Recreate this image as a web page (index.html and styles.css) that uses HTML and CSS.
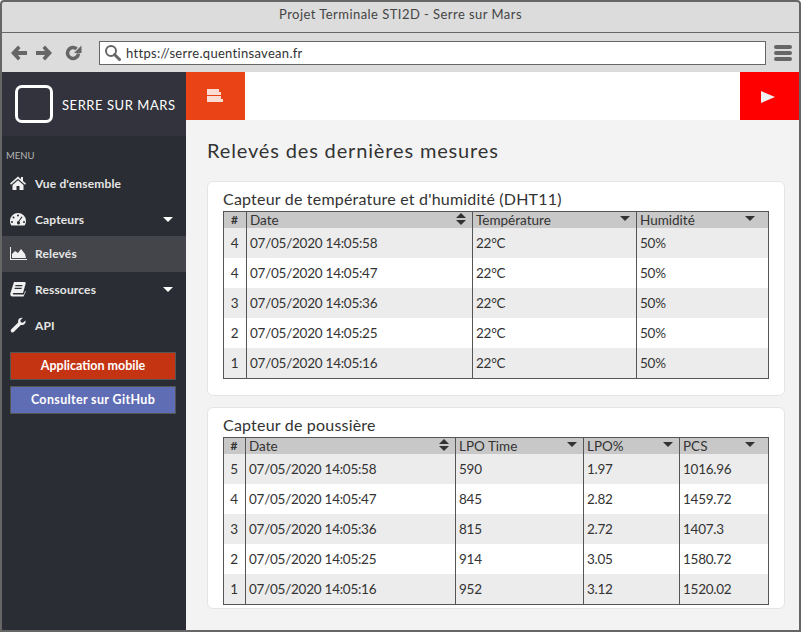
FILE: index.html
```html
<!DOCTYPE html>
<html>
<head>
  <title>Serre sur Mars</title>
  <link rel="stylesheet" href="styles.css">
</head>
<body>
  <div class="window">
    <div class="titlebar">Projet Terminale STI2D - Serre sur Mars</div>
    <div class="toolbar">
      <svg class="tool-icon" width="18" height="16" viewBox="0 0 18 16"><path d="M8 .500 1 8l7 7.500 2.500-2.500L8 10h9V6H8l2.500-3z"/></svg>
      <svg class="tool-icon" width="18" height="16" viewBox="0 0 18 16"><path d="M10 .500 17 8l-7 7.500L7.500 13 10 10H1V6h9L7.500 3z"/></svg>
      <svg class="tool-icon" width="17" height="16" viewBox="0 0 17 16"><path d="M13.500 8.500a5.500 5.500 0 1 1-1.900-4.700" fill="none" stroke="#666" stroke-width="3.500"/><path d="M16.500 .500v7.500H9z"/></svg>
      <div class="address">
        <svg width="17" height="17" viewBox="0 0 17 17"><circle cx="7" cy="7" r="5" fill="none" stroke="#666" stroke-width="2"/><path d="M10.500 10.500 15.500 15.500" stroke="#666" stroke-width="3" stroke-linecap="round"/></svg>
        <span>https://serre.quentinsavean.fr</span>
      </div>
      <div class="burger"><i></i><i></i><i></i></div>
    </div>
    <div class="app">
      <aside class="sidebar">
        <div class="brand">
          <div class="logo"></div>
          <span>SERRE SUR MARS</span>
        </div>
        <div class="menu-label">MENU</div>
        <nav class="menu">
          <a class="menu-item">
            <svg width="18" height="16" viewBox="0 0 18 16"><path d="M9 1.500 1 8.500l1 1.200L9 3.800l7 5.900 1-1.200-3-2.600V2h-2v2.200zM3.500 10 9 5.300l5.500 4.700v5h-4v-4h-3v4h-4z"/></svg>
            <span>Vue d'ensemble</span>
          </a>
          <a class="menu-item short">
            <svg width="18" height="16" viewBox="0 0 18 16"><path fill-rule="evenodd" d="M9 2a8 8 0 0 0-8 8c0 1.800.6 3.300 1.400 4.500h13.200C16.400 13.300 17 11.800 17 10a8 8 0 0 0-8-8zM9 3.500a1 1 0 1 1 0 2 1 1 0 0 1 0-2zM4.500 5.500a1 1 0 1 1 0 2 1 1 0 0 1 0-2zM3 10a1 1 0 1 1 0 2 1 1 0 0 1 0-2zM15 10a1 1 0 1 1 0 2 1 1 0 0 1 0-2zM12.500 5.500l1 .6L10.300 10.500a1.600 1.600 0 1 1-2.300.8 1.600 1.600 0 0 1 1.500-1.200z"/></svg>
            <span>Capteurs</span>
            <b class="caret"></b>
          </a>
          <a class="menu-item active">
            <svg width="18" height="16" viewBox="0 0 18 16"><path d="M1 2h1v12h16v1H1zM3 13V9l3-3 3 2 3-4 4 5 1 4z"/></svg>
            <span>Relevés</span>
          </a>
          <a class="menu-item">
            <svg width="18" height="16" viewBox="0 0 18 16"><path fill-rule="evenodd" d="M5 1h11l.8 1-2.800 10H4.500c-1 0-1 1.500 0 1.500H15l1-3.500.8.800L14.500 15.500H3.500C1.800 15.500 1 14 1.300 12.500zM6.500 4l-.3 1.200h7L13.500 4zM5.800 6.700l-.3 1.200h7l.3-1.200z"/></svg>
            <span>Ressources</span>
            <b class="caret"></b>
          </a>
          <a class="menu-item">
            <svg width="18" height="16" viewBox="0 0 18 16"><path d="M16.500 3.500c.5 2-.5 4-2.500 4.500-.8.200-1.500.100-2.200-.1L5 14.800c-.8.800-2 .8-2.700.1-.8-.8-.8-1.900 0-2.700l6.900-6.800C9 4.600 9 3.800 9.300 3c.7-1.800 2.700-2.700 4.500-2.200l-2.500 2.500.5 2 2 .5z"/></svg>
            <span>API</span>
          </a>
        </nav>
        <div class="actions">
          <a class="btn btn-red">Application mobile</a>
          <a class="btn btn-blue">Consulter sur GitHub</a>
        </div>
      </aside>
      <div class="page">
        <header class="topbar">
          <div class="top-btn orange">
            <div class="lines"><i class="w12"></i><i class="w14"></i><i class="w14"></i><i class="w16"></i></div>
          </div>
          <div class="top-btn red"><b class="play"></b></div>
        </header>
        <main class="content">
          <h1>Relevés des dernières mesures</h1>

          <section class="card first">
            <h2>Capteur de température et d'humidité (DHT11)</h2>
            <table>
              <colgroup><col class="c-23"><col class="c-226"><col class="c-164"><col></colgroup>
              <thead>
                <tr>
                  <th class="num">#</th>
                  <th>Date<b class="sort"></b></th>
                  <th>Température<b class="down"></b></th>
                  <th>Humidité<b class="down d2"></b></th>
                </tr>
              </thead>
              <tbody>
                <tr><td class="num">4</td><td>07/05/2020 14:05:58</td><td>22°C</td><td>50%</td></tr>
                <tr><td class="num">4</td><td>07/05/2020 14:05:47</td><td>22°C</td><td>50%</td></tr>
                <tr><td class="num">3</td><td>07/05/2020 14:05:36</td><td>22°C</td><td>50%</td></tr>
                <tr><td class="num">2</td><td>07/05/2020 14:05:25</td><td>22°C</td><td>50%</td></tr>
                <tr><td class="num">1</td><td>07/05/2020 14:05:16</td><td>22°C</td><td>50%</td></tr>
              </tbody>
            </table>
          </section>

          <section class="card second">
            <h2>Capteur de poussière</h2>
            <table>
              <colgroup><col class="c-22"><col class="c-210"><col class="c-128"><col class="c-96"><col></colgroup>
              <thead>
                <tr>
                  <th class="num">#</th>
                  <th>Date<b class="sort"></b></th>
                  <th>LPO Time<b class="down"></b></th>
                  <th>LPO%<b class="down"></b></th>
                  <th>PCS<b class="down d2"></b></th>
                </tr>
              </thead>
              <tbody>
                <tr><td class="num">5</td><td>07/05/2020 14:05:58</td><td>590</td><td>1.97</td><td>1016.96</td></tr>
                <tr><td class="num">4</td><td>07/05/2020 14:05:47</td><td>845</td><td>2.82</td><td>1459.72</td></tr>
                <tr><td class="num">3</td><td>07/05/2020 14:05:36</td><td>815</td><td>2.72</td><td>1407.3</td></tr>
                <tr><td class="num">2</td><td>07/05/2020 14:05:25</td><td>914</td><td>3.05</td><td>1580.72</td></tr>
                <tr><td class="num">1</td><td>07/05/2020 14:05:16</td><td>952</td><td>3.12</td><td>1520.02</td></tr>
              </tbody>
            </table>
          </section>
        </main>
      </div>
    </div>
  </div>
</body>
</html>
```

FILE: styles.css
```css
* {
  box-sizing: border-box;
}

body {
  margin: 0;
  font-family: Lato, "Open Sans", sans-serif;
  color: #333;
}

.window {
  width: 801px;
  height: 632px;
  border: 2px solid #666;
  border-radius: 4px 4px 0 0;
  display: flex;
  flex-direction: column;
  overflow: hidden;
  background-color: #dcdcdc;
}

.titlebar {
  height: 31px;
  border-bottom: 1px solid #666;
  padding-top: 4px;
  text-align: center;
  font-size: 13px;
  line-height: 16px;
  letter-spacing: 0.45px;
  color: #444;
}

.toolbar {
  height: 39px;
  display: flex;
  align-items: center;
  padding-left: 8px;
  flex-shrink: 0;
}

.tool-icon {
  fill: #666;
  margin-right: 7px;
}

.tool-icon:nth-child(3) {
  margin-left: 5px;
  margin-right: 9px;
}

.address {
  width: 667px;
  height: 24px;
  margin-left: 8px;
  display: flex;
  align-items: center;
  gap: 5px;
  padding-left: 4px;
  background-color: #fff;
  border: 1px solid #666;
  font-size: 13px;
  letter-spacing: 0.3px;
}

.burger {
  margin-left: 8px;
  width: 18px;
  display: flex;
  flex-direction: column;
  gap: 2px;
}

.burger i {
  height: 4px;
  border-radius: 2px;
  background-color: #666;
}

.app {
  flex: 1;
  display: flex;
  min-height: 0;
}

.sidebar {
  width: 184px;
  flex-shrink: 0;
  background-color: #2a2d33;
  color: #f0f0f0;
}

.brand {
  height: 64px;
  display: flex;
  align-items: center;
  gap: 9px;
  padding-left: 13px;
  background-color: #32333c;
  color: #fff;
  font-size: 13px;
  letter-spacing: 0.55px;
}

.brand span {
  padding-top: 2px;
}

.logo {
  width: 38px;
  height: 38px;
  border: 3px solid #fff;
  border-radius: 7px;
}

.menu-label {
  height: 30px;
  padding: 14px 0 0 4px;
  font-size: 9.500px;
  line-height: 12px;
  color: #b4b4b4;
}

.menu-item {
  height: 36px;
  display: flex;
  align-items: center;
  padding: 0 0 2px 7px;
  font-size: 12px;
  font-weight: 700;
  letter-spacing: 0.15px;
  color: #e6e6e6;
}

.menu-item.short {
  height: 34px;
  padding-bottom: 0;
}

.menu-item svg {
  fill: #f0f0f0;
  margin-right: 8px;
}

.menu-item.active {
  background-color: #43454b;
}

.caret {
  margin-left: auto;
  margin-right: 13px;
  border-style: solid;
  border-width: 5px 5px 0;
  border-color: #fff transparent transparent;
}

.actions {
  padding: 8px 10px 0 8px;
  display: flex;
  flex-direction: column;
  gap: 6px;
}

.btn {
  height: 28px;
  padding-bottom: 2px;
  border: 1px solid #555;
  display: flex;
  align-items: center;
  justify-content: center;
  color: #fff;
  font-size: 12.500px;
  font-weight: 700;
}

.btn-red {
  background-color: #c43413;
}

.btn-blue {
  background-color: #5f6db5;
  letter-spacing: 0.35px;
}

.page {
  flex: 1;
  display: flex;
  flex-direction: column;
  background-color: #f3f3f3;
}

.topbar {
  height: 48px;
  display: flex;
  justify-content: space-between;
  background-color: #fff;
}

.top-btn {
  width: 59px;
  display: flex;
  align-items: center;
  justify-content: center;
}

.orange {
  background-color: #ea4316;
}

.red {
  background-color: #f00;
}

.lines {
  width: 16px;
  margin: -1px 2px 0 0;
  display: flex;
  flex-direction: column;
  gap: 0.500px;
}

.lines i {
  height: 3px;
  background-color: #fbdcd3;
}

.w12 { width: 12px; }
.w14 { width: 14px; }
.w16 { width: 16px; }

.play {
  margin: 1px 4px 0 0;
  border-style: solid;
  border-width: 6.500px 0 6.500px 14px;
  border-color: transparent transparent transparent #f0f0f0;
}

.content {
  flex: 1;
  padding: 0 14px 0 21px;
}

h1 {
  margin: 0;
  height: 61px;
  padding-top: 19px;
  font-size: 20px;
  line-height: 23px;
  font-weight: 400;
  letter-spacing: 0.85px;
  color: #333;
}

.card {
  border: 1px solid #e4e4e4;
  border-radius: 6px;
  background-color: #fff;
  padding: 7px 15px 0;
}

.card.first {
  height: 215px;
  margin-bottom: 11px;
}

.card.second {
  height: 202px;
}

h2 {
  margin: 0 0 2px;
  height: 20px;
  font-size: 16px;
  line-height: 20px;
  font-weight: 400;
  letter-spacing: 0.2px;
  color: #333;
}

table {
  width: 546px;
  table-layout: fixed;
  border-collapse: collapse;
  border: 1px solid #555;
  font-size: 13.500px;
  color: #333;
}

.c-23 { width: 23px; }
.c-226 { width: 226px; }
.c-164 { width: 164px; }
.c-22 { width: 22px; }
.c-210 { width: 210px; }
.c-128 { width: 128px; }
.c-96 { width: 96px; }

th, td {
  border-left: 1px solid #555;
  padding: 0 0 0 3px;
  text-align: left;
}

th {
  height: 16px;
  line-height: 16px;
  font-weight: 400;
  background-color: #c8c8c8;
  position: relative;
}

td {
  height: 30px;
  letter-spacing: -0.25px;
}

tbody tr:nth-child(odd) {
  background-color: #ececec;
}

th.num, td.num {
  padding: 0 1px 0 0;
  text-align: center;
}

th.num {
  font-weight: 700;
  font-size: 12px;
}

.down {
  position: absolute;
  top: 4px;
  right: 6px;
  border-style: solid;
  border-width: 5px 5px 0;
  border-color: #333 transparent transparent;
}

.down.d2 {
  right: 13px;
}

.sort {
  position: absolute;
  top: 1px;
  right: 6px;
  width: 10px;
  height: 12px;
}

.sort::before, .sort::after {
  content: "";
  position: absolute;
  left: 0;
  border-style: solid;
  border-color: transparent;
}

.sort::before {
  top: 0;
  border-width: 0 5px 5px;
  border-bottom-color: #333;
}

.sort::after {
  bottom: 0;
  border-width: 5px 5px 0;
  border-top-color: #333;
}
```
